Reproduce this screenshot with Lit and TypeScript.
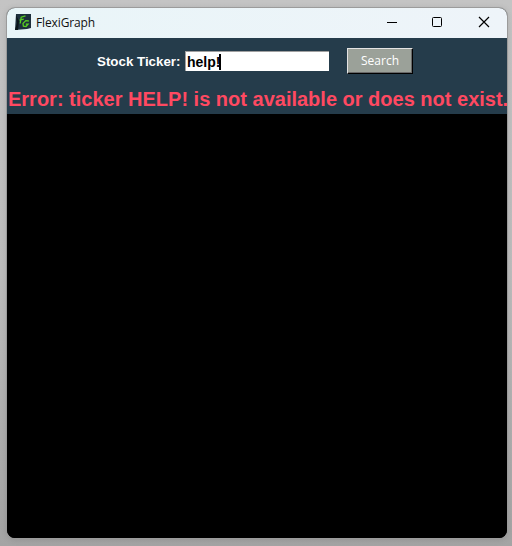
import { LitElement, html, css } from "lit";
import { customElement, state } from "lit/decorators.js";

@customElement("app-root")
export class AppRoot extends LitElement {
  static styles = css`
    :host {
      display: block;
      box-sizing: border-box;
      width: 512px;
      height: 546px;
      padding: 8px 5px 8px 7px;
      overflow: hidden;
      background: linear-gradient(180deg, #c4c4c4 0%, #bdbdbd 50%, #a4a4a4 100%);
    }
    .window {
      display: flex;
      flex-direction: column;
      height: 530px;
      border-radius: 8px;
      overflow: hidden;
      background: #000;
      box-shadow: 0 0 0 1px #9b9b9b, 0 1px 7px rgba(0, 0, 0, 0.14);
    }
    .titlebar {
      display: flex;
      align-items: center;
      height: 30px;
      flex: none;
      padding-left: 8px;
      background: linear-gradient(90deg, #e9f5f8, #eef4f9);
    }
    .logo {
      display: block;
      width: 16px;
      height: 16px;
      margin-right: 5px;
      margin-top: -3px;
    }
    .title {
      flex: 1;
      font: 12px/16px "Open Sans", "Noto Sans", sans-serif;
      letter-spacing: -0.12px;
      color: #111;
    }
    .controls {
      display: flex;
    }
    .controls svg {
      display: block;
      width: 46px;
      height: 28px;
      margin-top: -2px;
      fill: none;
      stroke: #000;
    }
    .panel {
      display: flex;
      flex-direction: column;
      flex: none;
      height: 76px;
      background: #253c4b;
      font-family: "Liberation Sans", Arial, sans-serif;
      font-weight: bold;
    }
    .form {
      display: flex;
      align-items: center;
      height: 46px;
      padding-left: 90px;
    }
    .label {
      width: 88px;
      font-size: 13.33px;
      color: #fff;
      white-space: nowrap;
    }
    .field {
      display: flex;
      align-items: center;
      box-sizing: border-box;
      width: 144px;
      height: 20px;
      padding-left: 1px;
      background: #fff;
      border-top: 1px solid #a0a0a0;
      border-left: 1px solid #a0a0a0;
      font-size: 14px;
      color: #000;
    }
    .caret {
      width: 2px;
      height: 16px;
      margin-left: -1px;
      background: #000;
    }
    .search {
      box-sizing: border-box;
      width: 66px;
      height: 26px;
      margin: 0 0 0 18px;
      padding: 0;
      border: 1px solid #000;
      border-top-color: #e3e3e3;
      border-left-color: #e3e3e3;
      border-radius: 0;
      background: #9ba199;
      box-shadow: inset -1px -1px 0 #696969;
      font: 12px/22px "Open Sans", "Noto Sans", sans-serif;
      color: #fff;
    }
    .error {
      height: 30px;
      padding-left: 1px;
      font-size: 20px;
      line-height: 30px;
      color: #ff4961;
      white-space: nowrap;
    }
    .graph {
      flex: 1;
      background: #000;
    }
  `;

  @state() private ticker = "help!";

  render() {
    return html`
      <div class="window">
        <div class="titlebar">
          <svg class="logo" viewBox="0 0 16 16">
            <path d="M1 0H16V14L12 15L0 16Z" fill="#1e303d" />
            <path d="M1 1L2 9L0 16H3L4 7Z" fill="#0b1418" />
            <path d="M5.2 9.5L6.2 3.2L10.5 1.8M4.5 6.2L8.8 5.2" fill="none" stroke="#59cf22" stroke-width="1.3" />
            <path d="M13.8 7L10.8 6.6L8 9.5L8.4 12.2L11 12.5L13 10.2H10.8" fill="none" stroke="#59cf22" stroke-width="1.3" />
          </svg>
          <span class="title">FlexiGraph</span>
          <div class="controls">
            <svg viewBox="0 0 46 28"><path d="M18 14.5H28" /></svg>
            <svg viewBox="0 0 46 28"><rect x="17.5" y="9.5" width="9" height="9" rx="1" /></svg>
            <svg viewBox="0 0 46 28"><path d="M18 9L28 19M28 9L18 19" stroke-width="1.2" /></svg>
          </div>
        </div>
        <div class="panel">
          <div class="form">
            <span class="label">Stock Ticker:</span>
            <div class="field"><span>${this.ticker}</span><span class="caret"></span></div>
            <button class="search">Search</button>
          </div>
          <div class="error">Error: ticker ${this.ticker.toUpperCase()} is not available or does not exist.</div>
        </div>
        <div class="graph"></div>
      </div>
    `;
  }
}
